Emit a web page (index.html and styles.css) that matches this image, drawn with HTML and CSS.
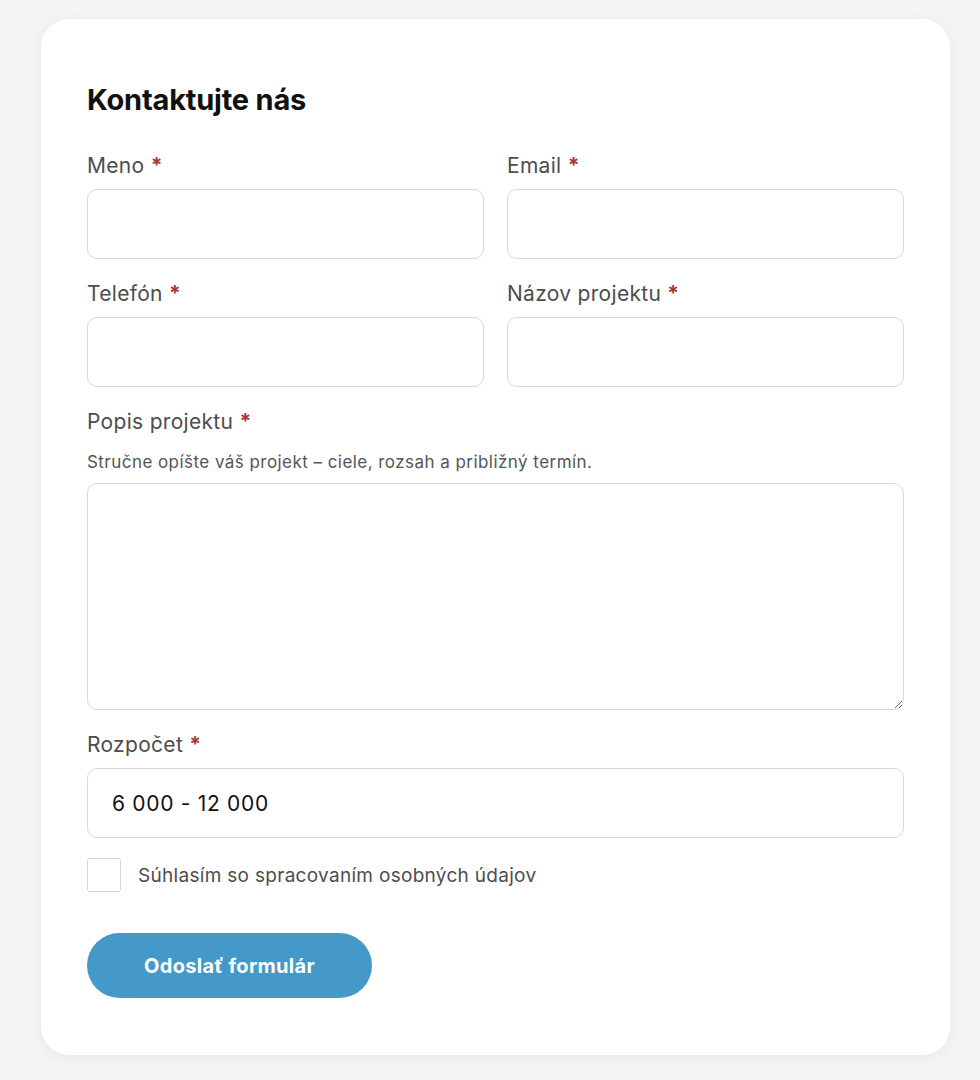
FILE: index.html
```html
<!DOCTYPE html>
<html lang="sk">

<head>
    <meta charset="UTF-8">
    <title>Kontaktujte nás</title>
    <link rel="stylesheet" href="styles.css">
</head>

<body>
    <div class="card">
        <h2 class="title">Kontaktujte nás</h2>
        <form class="form">
            <div class="row">
                <div class="field">
                    <label class="label">Meno <span class="req">*</span></label>
                    <input class="input" type="text">
                </div>
                <div class="field">
                    <label class="label">Email <span class="req">*</span></label>
                    <input class="input" type="email">
                </div>
            </div>
            <div class="row">
                <div class="field">
                    <label class="label">Telefón <span class="req">*</span></label>
                    <input class="input" type="tel">
                </div>
                <div class="field">
                    <label class="label">Názov projektu <span class="req">*</span></label>
                    <input class="input" type="text">
                </div>
            </div>
            <div class="field">
                <label class="label label-hinted">Popis projektu <span class="req">*</span></label>
                <p class="hint">Stručne opíšte váš projekt – ciele, rozsah a približný termín.</p>
                <textarea class="input textarea"></textarea>
            </div>
            <div class="field">
                <label class="label">Rozpočet <span class="req">*</span></label>
                <input class="input" type="text" value="6 000 - 12 000">
            </div>
            <label class="consent">
                <span class="box"></span>
                <span>Súhlasím so spracovaním osobných údajov</span>
            </label>
            <button class="btn" type="button">Odoslať formulár</button>
        </form>
    </div>
</body>

</html>
```

FILE: styles.css
```css
* {
    padding: 0;
    margin: 0;
    box-sizing: border-box;
}

body {
    background: #f4f4f4;
    font-family: Inter, "Noto Sans", sans-serif;
    padding: 19px 30px 25px 41px;
}

.card {
    background: #fff;
    border-radius: 28px;
    box-shadow: 0 2px 14px rgba(0, 0, 0, 0.05);
    padding: 64px 46px 57px;
}

.title {
    font-size: 29px;
    line-height: 34px;
    font-weight: 700;
    color: #111;
    letter-spacing: -0.2px;
    margin-bottom: 37px;
}

.form {
    display: flex;
    flex-direction: column;
    gap: 23px;
}

.row {
    display: grid;
    grid-template-columns: 1fr 1fr;
    gap: 23px;
}

.field {
    display: flex;
    flex-direction: column;
}

.label {
    font-size: 21px;
    line-height: 24px;
    color: #4d4d4d;
    letter-spacing: 0.3px;
    margin-bottom: 11px;
}

.label-hinted {
    margin-bottom: 0;
}

.req {
    color: #a8382c;
    font-weight: 700;
}

.hint {
    font-size: 17px;
    line-height: 20px;
    color: #555;
    letter-spacing: 0.45px;
    margin: 18px 0 11px;
}

.input {
    height: 70px;
    border: 1px solid #dadada;
    border-radius: 10px;
    padding: 0 24px;
    font-family: inherit;
    font-size: 21px;
    letter-spacing: 0.7px;
    color: #111;
    background: #fff;
    outline: none;
}

.textarea {
    height: 227px;
    resize: vertical;
}

.consent {
    display: flex;
    align-items: center;
    gap: 17px;
    font-size: 19px;
    letter-spacing: 0.3px;
    color: #4d4d4d;
    margin-top: -3px;
}

.box {
    width: 34px;
    height: 34px;
    border: 1.5px solid #d4d4d4;
    border-radius: 3px;
}

.btn {
    align-self: flex-start;
    width: 285px;
    height: 65px;
    margin-top: 18px;
    border: none;
    border-radius: 33px;
    background: #4499c9;
    color: #fff;
    font-family: inherit;
    font-size: 20px;
    font-weight: 700;
    letter-spacing: 0.3px;
    cursor: pointer;
}
```
